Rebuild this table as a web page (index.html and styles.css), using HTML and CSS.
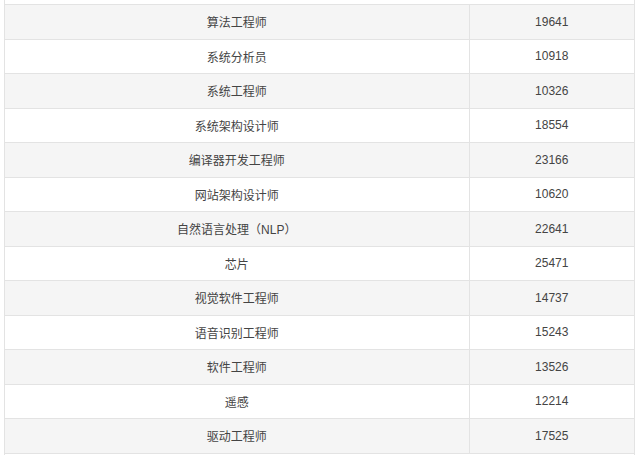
FILE: index.html
```html
<!DOCTYPE html>
<html lang="zh">
<head>
<meta charset="utf-8">
<link rel="stylesheet" href="styles.css">
</head>
<body>
<div class="frame">
<table class="data">
<tbody>
<tr><td>算法工程师</td><td>19641</td></tr>
<tr><td>系统分析员</td><td>10918</td></tr>
<tr><td>系统工程师</td><td>10326</td></tr>
<tr><td>系统架构设计师</td><td>18554</td></tr>
<tr><td>编译器开发工程师</td><td>23166</td></tr>
<tr><td>网站架构设计师</td><td>10620</td></tr>
<tr><td>自然语言处理（NLP）</td><td>22641</td></tr>
<tr><td>芯片</td><td>25471</td></tr>
<tr><td>视觉软件工程师</td><td>14737</td></tr>
<tr><td>语音识别工程师</td><td>15243</td></tr>
<tr><td>软件工程师</td><td>13526</td></tr>
<tr><td>遥感</td><td>12214</td></tr>
<tr><td>驱动工程师</td><td>17525</td></tr>
</tbody>
</table>
</div>
</body>
</html>
```

FILE: styles.css
```css
html, body {
  margin: 0;
  padding: 0;
  background: #fff;
}
.frame {
  width: 630px;
  margin-left: 4px;
  padding-top: 4px;
  height: 455px;
  border-left: 1px solid #e3e3e3;
  border-right: 1px solid #e3e3e3;
  box-sizing: border-box;
  width: 631px;
}
.data {
  width: 100%;
  border-collapse: collapse;
  font-family: "Liberation Sans", "Noto Sans CJK SC", sans-serif;
  font-size: 12px;
  color: #444;
}
.data td {
  height: 34.5px;
  padding: 0;
  box-sizing: border-box;
  text-align: center;
  border-top: 1px solid #e3e3e3;
  border-bottom: 1px solid #e3e3e3;
}
.data td:first-child {
  width: 464px;
  border-right: 1px solid #e3e3e3;
}
.data tr:nth-child(odd) td {
  background: #f5f5f5;
}
```
